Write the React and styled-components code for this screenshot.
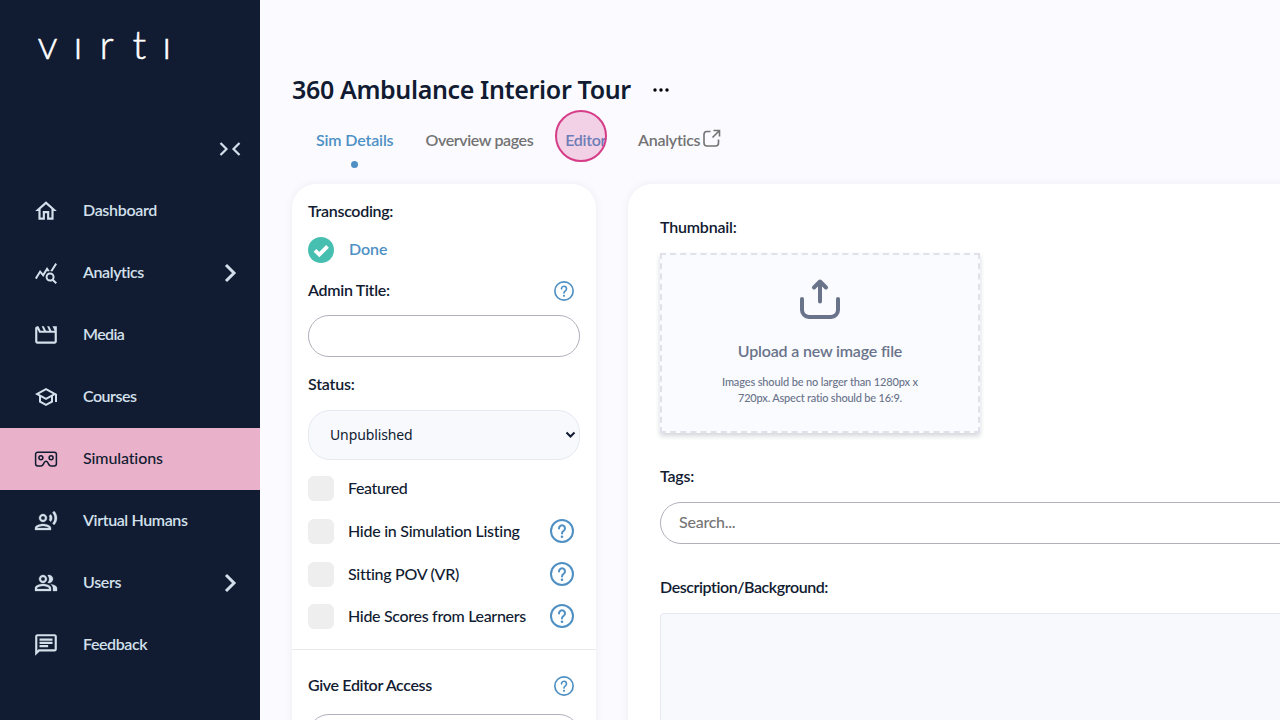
import React from 'react';
import styled, { createGlobalStyle } from 'styled-components';
import {
    MdOutlineHome,
    MdQueryStats,
    MdOutlineMovieCreation,
    MdOutlineSchool,
    MdOutlineRecordVoiceOver,
    MdOutlinePeopleAlt,
    MdOutlineChat,
} from 'react-icons/md';

// Styles
//----------------------------------------------------------------------------------//

const GlobalStyle = createGlobalStyle`
    * {
        box-sizing: border-box;
    }

    body {
        margin: 0;
        background: #fafaff;
        color: #111b31;
        font-family: Lato, 'Open Sans', sans-serif;
        font-size: 16px;
        font-weight: 600;
        overflow: hidden;
    }
`;

const Page = styled.div`
    display: flex;
    width: 100vw;
    height: 100vh;
    overflow: hidden;
`;

const Text = styled.span`
    letter-spacing: ${({ $track }) => $track || 0}px;
    white-space: nowrap;
`;

const Sidebar = styled.aside`
    display: flex;
    flex-direction: column;
    flex: none;
    width: 260px;
    background: #111b31;
    color: #d3e0ec;
`;

const Logo = styled.svg`
    flex: none;
    width: 150px;
    height: 66px;
    margin: 10px 0 0 34px;
    fill: #fff;
    stroke: #fff;
    stroke-width: 0.5px;
    font-family: Lato, sans-serif;
    font-size: 40px;
    font-weight: 300;
`;

const Collapse = styled.div`
    display: flex;
    justify-content: flex-end;
    align-items: center;
    height: 104px;
    padding: 42px 19px 0 0;
`;

const Nav = styled.nav`
    display: flex;
    flex-direction: column;
`;

const NavItem = styled.a`
    display: flex;
    align-items: center;
    height: 62px;
    padding: 0 23px 0 33px;
    background: ${({ $active }) => ($active ? '#e9b2ca' : 'transparent')};
    color: ${({ $active }) => ($active ? '#111b31' : '#d3e0ec')};
    font-weight: ${({ $active }) => ($active ? 500 : 600)};
`;

const IconSlot = styled.span`
    display: flex;
    justify-content: center;
    flex: none;
    width: 26px;
    margin-right: 24px;

    svg {
        flex: none;
        width: ${({ $size }) => $size}px;
        height: ${({ $size }) => $size}px;
        ${({ $bold }) => $bold && 'stroke-width: 0.3px;'}
    }

    /* the Material icons carry an empty 24x24 frame */
    path[fill='none'] {
        stroke: none;
    }
`;

const NavLabel = styled(Text)`
    flex: 1;
    padding-bottom: 3px;
`;

const Main = styled.main`
    display: flex;
    flex-direction: column;
    flex: 1;
    min-width: 0;
    padding-left: 32px;
    overflow: hidden;
`;

const TitleRow = styled.div`
    display: flex;
    align-items: center;
    gap: 22px;
    height: 40px;
    margin-top: 70px;
`;

const Title = styled.h1`
    margin: 0;
    padding-bottom: 2px;
    font-family: 'Noto Sans', sans-serif;
    font-size: 25px;
    font-weight: 600;
    letter-spacing: -0.36px;
    white-space: nowrap;
`;

const Tabs = styled.div`
    display: flex;
    gap: 32px;
    height: 74px;
    padding: 18px 24px 0;
`;

const Tab = styled.div`
    position: relative;
    display: flex;
    align-items: center;
    height: 26px;
    color: ${({ $active }) => ($active ? '#4f90c4' : '#737373')};

    ${Text} {
        padding-bottom: 3px;
    }
`;

const ExternalIcon = styled.svg`
    width: 20px;
    height: 20px;
    margin: 0 0 4px 2px;
`;

const Dot = styled.i`
    position: absolute;
    left: 50%;
    bottom: -14px;
    width: 7px;
    height: 7px;
    margin-left: -4px;
    border-radius: 50%;
    background: #4f90c4;
`;

const ClickRing = styled.i`
    position: absolute;
    left: -10px;
    top: -18px;
    width: 52px;
    height: 52px;
    border: 2px solid #d63d89;
    border-radius: 50%;
    background: rgba(214, 61, 137, 0.22);
`;

const Columns = styled.div`
    display: flex;
    gap: 32px;
    flex: 1;
    min-height: 0;
`;

const Card = styled.section`
    display: flex;
    flex-direction: column;
    flex: none;
    width: ${({ $wide }) => ($wide ? '900px' : '304px')};
    height: 900px;
    padding: ${({ $wide }) => ($wide ? '32px' : '16px')};
    border-radius: 24px;
    background: #fff;
    box-shadow: 0 0 8px rgba(17, 27, 49, 0.06);
`;

const LabelRow = styled.div`
    display: flex;
    flex: none;
    align-items: center;
    justify-content: space-between;
    height: 24px;
    margin-top: ${({ $top }) => $top || 0}px;
    padding-right: 6px;

    ${Text} {
        padding-bottom: ${({ $lift }) => $lift ?? 4}px;
    }
`;

const DoneRow = styled.div`
    display: flex;
    align-items: center;
    gap: 15px;
    height: 26px;
    margin-top: 13px;
    color: #4f90c4;

    ${Text} {
        padding-bottom: 3px;
    }
`;

const Input = styled.input`
    flex: none;
    width: 100%;
    height: 42px;
    margin-top: ${({ $top }) => $top}px;
    padding: 0 18px 3px;
    border: 1px solid #b1b1bd;
    border-radius: 21px;
    background: #fff;
    font: inherit;
    font-weight: 500;
    letter-spacing: -0.25px;

    &::placeholder {
        color: #757575;
    }
`;

const Select = styled.div`
    display: flex;
    flex: none;
    align-items: center;
    justify-content: space-between;
    height: 50px;
    margin-top: 13px;
    padding: 0 3px 0 21px;
    border: 1px solid #e5e9f1;
    border-radius: 22px;
    background: #f8f9fc;
    font-family: 'Noto Sans', sans-serif;
    font-size: 14px;
    font-weight: 400;

    ${Text} {
        padding-bottom: 2px;
    }
`;

const CheckList = styled.div`
    display: flex;
    flex-direction: column;
    gap: 16.8px;
    margin: 16px -16px 0;
    padding: 0 22px 18.6px 16px;
    border-bottom: 1px solid #e9eaed;
`;

const CheckRow = styled.label`
    display: flex;
    gap: 14px;
    height: 26px;
    font-weight: 500;

    ${Text} {
        flex: 1;
        line-height: 24px;
    }
`;

const Box = styled.i`
    width: 26px;
    height: 25px;
    border-radius: 6px;
    background: #eee;
`;

const Upload = styled.div`
    display: flex;
    flex: none;
    flex-direction: column;
    align-items: center;
    width: 320px;
    height: 180px;
    margin-top: 13px;
    padding-top: 22px;
    border: 2px dashed #e0e1ea;
    background: #fafbfe;
    box-shadow: 0 3px 5px rgba(17, 27, 49, 0.18);
    color: #69738a;
`;

const UploadTitle = styled(Text)`
    margin-top: 20px;
    line-height: 20px;
`;

const UploadHint = styled.div`
    display: flex;
    flex-direction: column;
    align-items: center;
    margin-top: 13px;
    font-size: 11px;
    font-weight: 500;
    line-height: 16px;
`;

const TextArea = styled.div`
    flex: none;
    height: 240px;
    margin-top: 13px;
    border: 1px solid #e5e9f1;
    border-radius: 4px;
    background: #f8f9fc;
`;

//----------------------------------------------------------------------------------//

const VrIcon = () => (
    <svg viewBox="0 0 24 24" fill="none" stroke="currentColor" strokeWidth="1.4">
        <g>
            <path fill="transparent" d="M4.4 5.7h15.2a2 2 0 0 1 2 2v8.7a2 2 0 0 1-2 2h-3.2c-1.7 0-1.9-1.4-2.6-2.9-.5-1-.9-1.5-1.8-1.5s-1.3.5-1.8 1.5c-.7 1.5-.9 2.9-2.6 2.9H4.4a2 2 0 0 1-2-2V7.7a2 2 0 0 1 2-2z" />
            <circle cx="7.3" cy="10.9" r="1.8" />
            <circle cx="16.7" cy="10.9" r="1.8" />
        </g>
    </svg>
);

const Chevron = () => (
    <svg width="14" height="20" viewBox="0 0 14 20" fill="none" stroke="currentColor" strokeWidth="3">
        <path d="M3 2l8 8-8 8" />
    </svg>
);

const HelpIcon = ({ size }) => (
    <svg width={size} height={size} viewBox="0 0 24 24" fill="none" stroke="#4f90c4" strokeWidth="2">
        <circle cx="12" cy="12" r="11" />
        <path d="M9 9.4a3 3 0 1 1 4.7 2.4C12.5 12.6 12 13 12 14.5" strokeLinecap="round" />
        <circle cx="12" cy="17.8" r="1.3" fill="#4f90c4" stroke="none" />
    </svg>
);

const nav = [
    { label: 'Dashboard', icon: MdOutlineHome, size: 26, track: -0.32 },
    { label: 'Analytics', icon: MdQueryStats, size: 24, track: -0.42, more: true },
    { label: 'Media', icon: MdOutlineMovieCreation, size: 26, track: -0.6 },
    { label: 'Courses', icon: MdOutlineSchool, size: 24, track: -0.5 },
    { label: 'Simulations', icon: VrIcon, size: 26, track: -0.12, active: true },
    { label: 'Virtual Humans', icon: MdOutlineRecordVoiceOver, size: 24, track: -0.39, bold: true },
    { label: 'Users', icon: MdOutlinePeopleAlt, size: 24, track: -0.3, bold: true, more: true },
    { label: 'Feedback', icon: MdOutlineChat, size: 26, track: -0.42 },
];

const checks = [
    { label: 'Featured', track: -0.38 },
    { label: 'Hide in Simulation Listing', track: -0.27, help: true },
    { label: 'Sitting POV (VR)', track: -0.29, help: true },
    { label: 'Hide Scores from Learners', track: -0.31, help: true },
];

const App = () => (
    <Page>
        <GlobalStyle />
        <Sidebar>
            <Logo viewBox="0 0 150 66" aria-label="virti">
                <text y="49" x="3.5 39.5 65.5 98.5 128.2">vırtı</text>
            </Logo>
            <Collapse>
                <svg width="22" height="16" viewBox="0 0 22 16" fill="none" stroke="currentColor" strokeWidth="2.2">
                    <path d="M1.5 2l6 6-6 6M20.5 2l-6 6 6 6" />
                </svg>
            </Collapse>
            <Nav>
                {nav.map(({ label, icon: Icon, size, track, bold, active, more }) => (
                    <NavItem key={label} $active={active}>
                        <IconSlot $size={size} $bold={bold}><Icon /></IconSlot>
                        <NavLabel $track={track}>{label}</NavLabel>
                        {more && <Chevron />}
                    </NavItem>
                ))}
            </Nav>
        </Sidebar>
        <Main>
            <TitleRow>
                <Title>360 Ambulance Interior Tour</Title>
                <svg width="16" height="4" viewBox="0 0 16 4">
                    <circle cx="2" cy="2" r="1.7" />
                    <circle cx="8" cy="2" r="1.7" />
                    <circle cx="14" cy="2" r="1.7" />
                </svg>
            </TitleRow>
            <Tabs>
                <Tab $active><Text $track={-0.15}>Sim Details</Text><Dot /></Tab>
                <Tab><Text $track={-0.39}>Overview pages</Text></Tab>
                <Tab $active><Text $track={-0.32}>Editor</Text><ClickRing /></Tab>
                <Tab>
                    <Text $track={-0.28}>Analytics</Text>
                    <ExternalIcon viewBox="0 0 20 20" fill="none" stroke="currentColor" strokeWidth="1.6">
                        <path d="M8.5 2.5H5a3 3 0 0 0-3 3V14a3 3 0 0 0 3 3h8.5a3 3 0 0 0 3-3v-3.500M11.500 1.500h6v6M17.500 1.500L10.500 8.500" />
                    </ExternalIcon>
                </Tab>
            </Tabs>
            <Columns>
                <Card>
                    <LabelRow><Text $track={-0.3}>Transcoding:</Text></LabelRow>
                    <DoneRow>
                        <svg width="26" height="26" viewBox="0 0 26 26" fill="none">
                            <circle cx="13" cy="13" r="13" fill="#47bfb0" />
                            <path d="M7 13.3l4.3 4.3 8.2-8.3" stroke="#fff" strokeWidth="3.8" />
                        </svg>
                        <Text $track={-0.05}>Done</Text>
                    </DoneRow>
                    <LabelRow $top={16}><Text $track={-0.3}>Admin Title:</Text><HelpIcon size={20} /></LabelRow>
                    <Input $top={12} />
                    <LabelRow $top={16}><Text $track={-0.2}>Status:</Text></LabelRow>
                    <Select>
                        <Text $track={-0.12}>Unpublished</Text>
                        <svg width="11" height="8" viewBox="0 0 11 8" fill="none" stroke="#111b31" strokeWidth="2">
                            <path d="M1.5 1.5l4 4 4-4" />
                        </svg>
                    </Select>
                    <CheckList>
                        {checks.map(({ label, track, help }) => (
                            <CheckRow key={label}>
                                <Box />
                                <Text $track={track}>{label}</Text>
                                {help && <HelpIcon size={24} />}
                            </CheckRow>
                        ))}
                    </CheckList>
                    <LabelRow $top={24} $lift={2}><Text $track={-0.36}>Give Editor Access</Text><HelpIcon size={20} /></LabelRow>
                    <Input $top={16} />
                </Card>
                <Card $wide>
                    <LabelRow><Text $track={-0.2}>Thumbnail:</Text></LabelRow>
                    <Upload>
                        <svg width="44" height="44" viewBox="0 0 44 44" fill="none" stroke="currentColor" strokeWidth="4" strokeLinecap="round">
                            <path d="M4 22v11a7 7 0 0 0 7 7h22a7 7 0 0 0 7-7V22M22 24.5V4.5M16 10.5l6-6 6 6" strokeLinejoin="round" />
                        </svg>
                        <UploadTitle $track={-0.18}>Upload a new image file</UploadTitle>
                        <UploadHint>
                            <Text $track={-0.14}>Images should be no larger than 1280px x</Text>
                            <Text $track={-0.21}>720px. Aspect ratio should be 16:9.</Text>
                        </UploadHint>
                    </Upload>
                    <LabelRow $top={32}><Text $track={-0.25}>Tags:</Text></LabelRow>
                    <Input $top={13} placeholder="Search..." />
                    <LabelRow $top={32}><Text $track={-0.43}>Description/Background:</Text></LabelRow>
                    <TextArea />
                </Card>
            </Columns>
        </Main>
    </Page>
);

export default App;
